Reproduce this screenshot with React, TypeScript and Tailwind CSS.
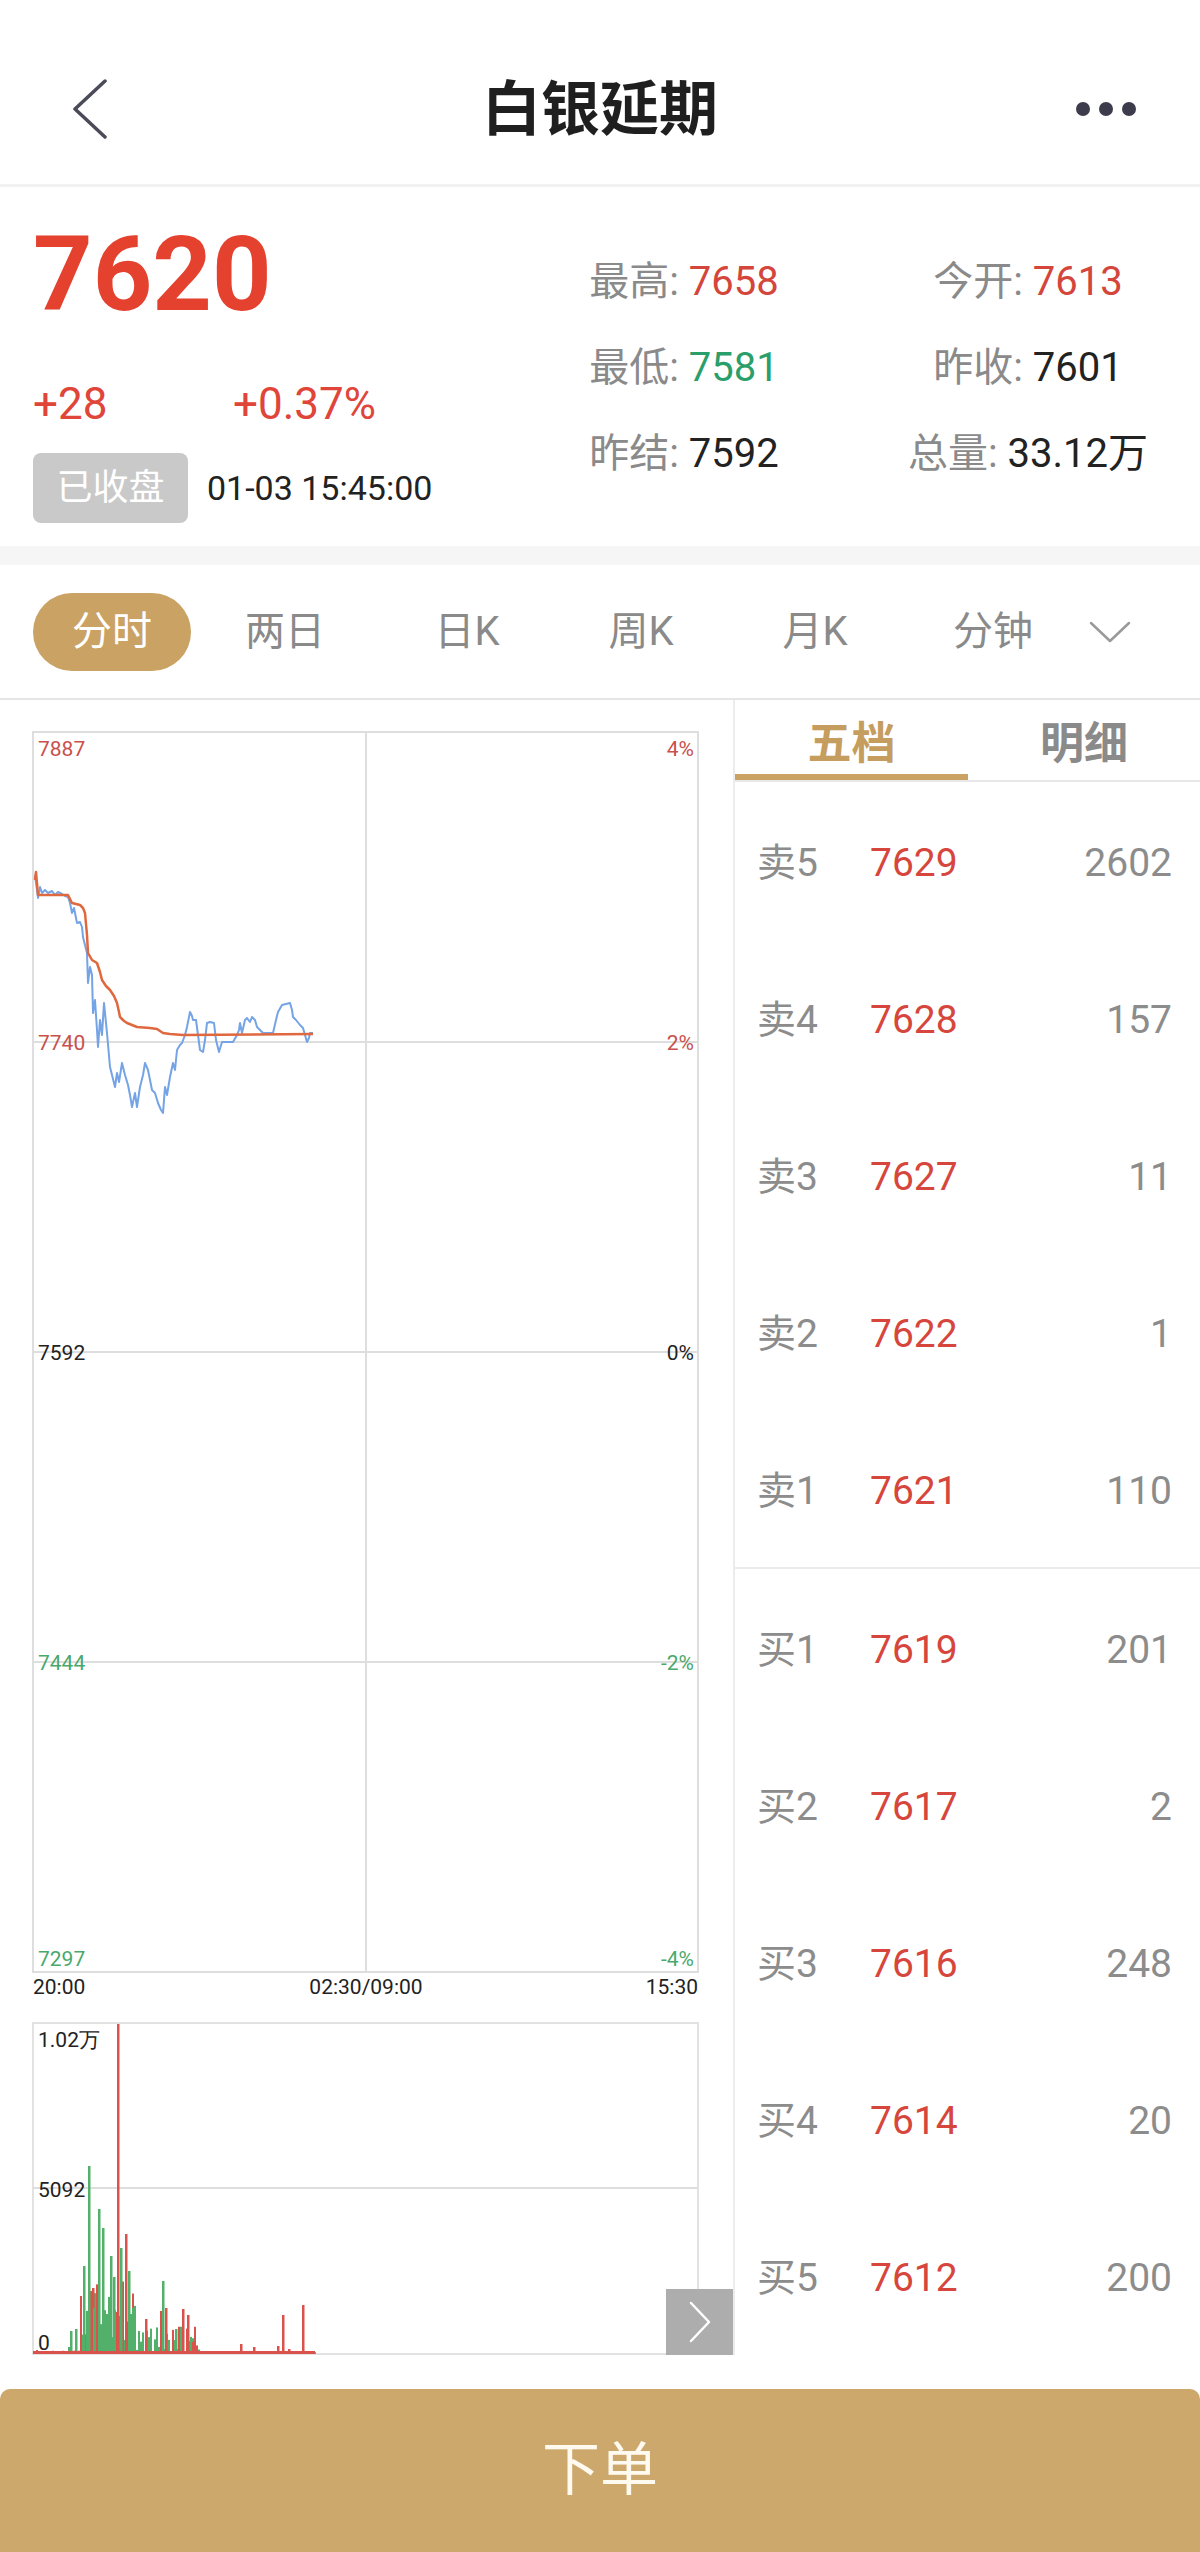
import React from 'react';

const blueLine: [number, number][] = [
  [35, 175], [37, 190], [38, 198], [40, 187], [42, 193], [45, 190], [48, 193], [52, 191], [55, 195], [58, 192],
  [62, 194], [65, 196], [68, 197], [70, 203], [72, 213], [74, 208], [77, 223], [80, 222], [82, 227], [83, 237],
  [85, 245], [87, 253], [88, 283], [90, 267], [92, 275], [93, 313], [95, 300], [97, 330], [98, 347], [100, 320],
  [102, 335], [104, 303], [107, 333], [110, 367], [112, 375], [115, 387], [117, 373], [119, 382], [122, 363],
  [125, 375], [128, 385], [130, 395], [132, 407], [135, 393], [137, 407], [140, 387], [143, 375], [145, 363],
  [148, 370], [150, 380], [152, 390], [155, 393], [158, 403], [161, 410], [163, 413], [165, 387], [167, 395],
  [170, 377], [173, 363], [175, 370], [177, 350], [180, 345], [182, 343], [185, 335], [187, 327], [190, 312],
  [192, 316], [193, 320], [196, 320], [198, 335], [200, 350], [203, 352], [205, 340], [207, 323], [210, 322],
  [214, 323], [216, 340], [219, 352], [222, 342], [226, 342], [233, 342], [237, 335], [239, 330], [240, 323],
  [242, 333], [245, 320], [247, 318], [250, 322], [252, 317], [255, 320], [257, 327], [260, 330], [263, 333],
  [268, 333], [273, 333], [276, 320], [278, 312], [282, 305], [286, 304], [290, 303], [292, 310], [293, 317],
  [296, 320], [300, 325], [303, 328], [305, 335], [307, 342], [309, 338], [310, 333], [313, 333],
];

const avgLine: [number, number][] = [
  [35, 180], [36, 172], [38, 195], [68, 195], [72, 203], [80, 205], [83, 208], [85, 213], [87, 235], [88, 253],
  [92, 260], [97, 263], [100, 272], [102, 280], [106, 286], [110, 290], [114, 296], [117, 303], [119, 312],
  [120, 317], [124, 321], [127, 323], [132, 325], [137, 327], [150, 328], [157, 329], [160, 331], [163, 333],
  [170, 334], [183, 335], [313, 334],
];

const GREEN = '#52b06b';
const RED = '#d9534c';

// notable volume spikes: x, height, colour
const spikes: [number, number, string][] = [
  [70, 23, GREEN], [75, 25, GREEN], [83, 88, GREEN], [88, 188, GREEN], [92, 66, RED], [93, 46, GREEN],
  [98, 145, GREEN], [102, 126, GREEN], [106, 40, GREEN], [110, 98, GREEN], [113, 77, GREEN], [120, 106, GREEN],
  [125, 120, RED], [128, 83, GREEN], [132, 46, GREEN], [145, 35, RED], [160, 43, RED], [162, 73, GREEN],
  [165, 46, RED], [175, 25, GREEN], [182, 45, RED], [187, 39, RED], [192, 12, RED], [240, 10, RED],
  [253, 7, RED], [277, 8, RED], [282, 39, RED], [288, 5, RED], [302, 49, RED], [117, 330, RED],
];

function rand(i: number) {
  const x = Math.sin(i * 12.9898) * 43758.5453;
  return x - Math.floor(x);
}

const noise: [number, number, string][] = [];
for (let x = 34; x <= 314; x += 2) {
  const r = rand(x);
  let h = 0;
  if (x < 68) h = r * 4;
  else if (x < 80) h = r * 18;
  else if (x < 135) h = 14 + r * 60;
  else if (x < 200) h = r * 28;
  else h = r * 3;
  noise.push([x, h, rand(x + 7) > 0.45 ? GREEN : RED]);
}

const pts = (a: [number, number][]) => a.map(([x, y]) => `${x},${y}`).join(' ');

function TimeChart() {
  const font = 'Roboto, sans-serif';
  const volBottom = 1654;
  return (
    <svg width="733" height="1656" viewBox="0 0 733 1656" className="block">
      {/* price area */}
      <rect x="33" y="32" width="665" height="1240" fill="none" stroke="#dedede" strokeWidth="2" />
      <line x1="366" y1="32" x2="366" y2="1272" stroke="#dedede" strokeWidth="2" />
      {[342, 652, 962].map((y) => (
        <line key={y} x1="33" y1={y} x2="698" y2={y} stroke="#dedede" strokeWidth="2" />
      ))}
      <polyline points={pts(blueLine)} fill="none" stroke="#74a3e6" strokeWidth="2" strokeLinejoin="round" />
      <polyline points={pts(avgLine)} fill="none" stroke="#e0683e" strokeWidth="2.5" strokeLinejoin="round" />
      <g fontFamily={font} fontSize="21">
        <text x="38" y="56" fill="#c9504b">7887</text>
        <text x="694" y="56" fill="#c9504b" textAnchor="end">4%</text>
        <text x="38" y="350" fill="#c9504b">7740</text>
        <text x="694" y="350" fill="#c9504b" textAnchor="end">2%</text>
        <text x="38" y="660" fill="#222">7592</text>
        <text x="694" y="660" fill="#222" textAnchor="end">0%</text>
        <text x="38" y="970" fill="#4aa86c">7444</text>
        <text x="694" y="970" fill="#4aa86c" textAnchor="end">-2%</text>
        <text x="38" y="1266" fill="#4aa86c">7297</text>
        <text x="694" y="1266" fill="#4aa86c" textAnchor="end">-4%</text>
        <text x="33" y="1294" fill="#222">20:00</text>
        <text x="366" y="1294" fill="#222" textAnchor="middle">02:30/09:00</text>
        <text x="698" y="1294" fill="#222" textAnchor="end">15:30</text>
      </g>

      {/* volume area */}
      <rect x="33" y="1323" width="665" height="331" fill="none" stroke="#e2e2e2" strokeWidth="2" />
      <line x1="33" y1="1488" x2="698" y2="1488" stroke="#dedede" strokeWidth="2" />
      {noise.map(([x, h, c], i) => (
        <rect key={'n' + i} x={x} y={volBottom - h} width="2" height={h} fill={c} />
      ))}
      {spikes.map(([x, h, c], i) => (
        <rect key={'s' + i} x={x} y={volBottom - h} width="2.5" height={h} fill={c} />
      ))}
      <rect x="33" y={volBottom - 3} width="282" height="3" fill={RED} />
      <g fontFamily={font} fontSize="21" fill="#222">
        <text x="38" y="1347">1.02万</text>
        <text x="38" y="1497">5092</text>
        <text x="38" y="1650">0</text>
      </g>
    </svg>
  );
}

const stats = [
  { label: '最高', value: '7658', cls: 'text-[#d4463c]' },
  { label: '今开', value: '7613', cls: 'text-[#d4463c]' },
  { label: '最低', value: '7581', cls: 'text-[#2a9f6b]' },
  { label: '昨收', value: '7601', cls: 'text-[#222222]' },
  { label: '昨结', value: '7592', cls: 'text-[#222222]' },
  { label: '总量', value: '33.12万', cls: 'text-[#222222]' },
];

const sells = [
  ['卖5', '7629', '2602'],
  ['卖4', '7628', '157'],
  ['卖3', '7627', '11'],
  ['卖2', '7622', '1'],
  ['卖1', '7621', '110'],
];

const buys = [
  ['买1', '7619', '201'],
  ['买2', '7617', '2'],
  ['买3', '7616', '248'],
  ['买4', '7614', '20'],
  ['买5', '7612', '200'],
];

const tabs = [
  { name: '两日', w: 'w-[188px]' },
  { name: '日K', w: 'w-[176px]' },
  { name: '周K', w: 'w-[172px]' },
  { name: '月K', w: 'w-[176px]' },
  { name: '分钟', w: 'w-[180px]' },
];

function BookRow({ row }: { row: string[] }) {
  return (
    <div className="flex items-center h-[157px] pt-[6px] pl-[22px] pr-[28px] text-[39px]">
      <span className="w-[113px] text-[#8c8c8c]">{row[0]}</span>
      <span className="text-[#d6463c]">{row[1]}</span>
      <span className="ml-auto text-[#8c8c8c]">{row[2]}</span>
    </div>
  );
}

export default function App() {
  return (
    <div className="w-[1200px] h-[2552px] bg-white font-['Roboto','Noto_Sans_CJK_SC',sans-serif] overflow-hidden">
      {/* Header */}
      <header className="h-[187px] pt-[34px] border-b-[3px] border-[#f2f2f2]">
        <div className="h-[150px] grid grid-cols-[1fr_auto_1fr] items-center px-[72px]">
          <svg width="36" height="60" viewBox="0 0 36 60">
            <polyline points="33,2 3,30 33,58" fill="none" stroke="#4a4a58" strokeWidth="3.5" strokeLinecap="round" strokeLinejoin="round" />
          </svg>
          <h1 className="text-[59px] font-bold text-[#1f1f1f] leading-none">白银延期</h1>
          <div className="flex gap-[9px] justify-end mr-[-8px]">
            <span className="w-[14px] h-[14px] rounded-full bg-[#3c3c4c]" />
            <span className="w-[14px] h-[14px] rounded-full bg-[#3c3c4c]" />
            <span className="w-[14px] h-[14px] rounded-full bg-[#3c3c4c]" />
          </div>
        </div>
      </header>

      {/* Quote */}
      <section className="h-[359px] flex">
        <div className="w-[512px] pt-[36px] pl-[33px]">
          <div className="text-[104px] font-bold leading-none text-[#e5412f]">7620</div>
          <div className="mt-[55px] flex text-[44px] leading-none text-[#e0453a]">
            <span className="w-[200px]">+28</span>
            <span>+0.37%</span>
          </div>
          <div className="mt-[27px] flex items-center">
            <span className="w-[155px] h-[70px] rounded-[8px] bg-[#c9c9c9] text-white text-[36px] flex items-center justify-center">
              已收盘
            </span>
            <span className="ml-[19px] text-[34px] text-[#222222]">01-03 15:45:00</span>
          </div>
        </div>
        <div className="w-[688px] pt-[52px] grid grid-cols-2 auto-rows-[86px]">
          {stats.map((s) => (
            <div key={s.label} className="flex items-center justify-center text-[40px]">
              <span className="text-[#8a8a8a]">{s.label}: </span>
              <span className={s.cls}>&nbsp;{s.value}</span>
            </div>
          ))}
        </div>
      </section>

      <div className="h-[19px] bg-[#f6f6f7]" />

      {/* Period tabs */}
      <nav className="h-[135px] flex items-center pl-[33px] border-b-2 border-[#e6e6e6]">
        <span className="w-[158px] h-[78px] rounded-full bg-[#c9a264] text-white text-[40px] flex items-center justify-center">
          分时
        </span>
        {tabs.map((t) => (
          <span key={t.name} className={`${t.w} text-center text-[40px] text-[#8a8a8a]`}>
            {t.name}
          </span>
        ))}
        <span className="w-[54px] flex items-center justify-center">
          <svg width="42" height="22" viewBox="0 0 42 22">
            <polyline points="2,2 21,20 40,2" fill="none" stroke="#9a9a9a" strokeWidth="2.5" strokeLinecap="round" strokeLinejoin="round" />
          </svg>
        </span>
      </nav>

      {/* Main */}
      <main className="h-[1655px] flex">
        <div className="w-[733px] relative">
          <TimeChart />
          <button className="absolute left-[666px] top-[1589px] w-[67px] h-[66px] bg-[#adadad] flex items-center justify-center">
            <svg width="22" height="42" viewBox="0 0 22 42">
              <polyline points="2,2 20,21 2,40" fill="none" stroke="#ffffff" strokeWidth="2.5" strokeLinecap="round" strokeLinejoin="round" />
            </svg>
          </button>
        </div>
        <div className="flex-1 border-l-2 border-[#ececec]">
          <div className="h-[82px] flex border-b-2 border-[#e8e8e8]">
            <div className="w-[233px] flex flex-col items-center justify-end">
              <span className="text-[44px] font-bold text-[#c59d5f] leading-none mb-[8px]">五档</span>
              <span className="w-full h-[6px] bg-[#c9a264]" />
            </div>
            <div className="flex-1 flex items-end justify-center pb-[14px]">
              <span className="text-[44px] font-bold text-[#8a8a8a] leading-none">明细</span>
            </div>
          </div>
          <div className="border-b-2 border-[#ececec]">
            {sells.map((r) => (
              <BookRow key={r[0]} row={r} />
            ))}
          </div>
          <div>
            {buys.map((r) => (
              <BookRow key={r[0]} row={r} />
            ))}
          </div>
        </div>
      </main>

      <div className="mt-[34px] h-[163px] rounded-t-[10px] bg-[#cca86d] flex items-center justify-center">
        <span className="text-[58px] text-[#fffaf0]">下单</span>
      </div>
    </div>
  );
}
